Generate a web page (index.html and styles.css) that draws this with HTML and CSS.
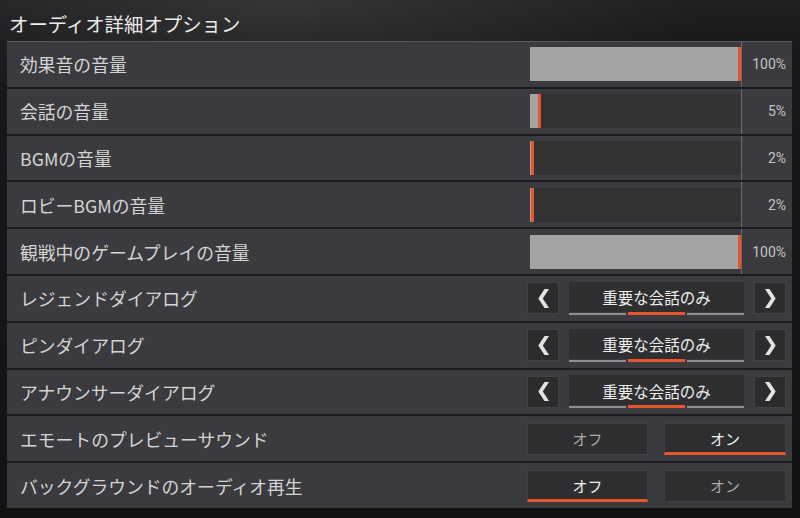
FILE: index.html
```html
<!DOCTYPE html>
<html lang="ja">
<head>
<meta charset="utf-8">
<link rel="stylesheet" href="styles.css">
</head>
<body>
<div class="page">
  <h1 class="title">オーディオ詳細オプション</h1>
  <div class="list">
    <div class="row">
      <div class="label">効果音の音量</div>
      <div class="slider">
        <div class="track"><div class="fill" style="width:100%"></div></div>
        <div class="pct">100%</div>
      </div>
    </div>
    <div class="row">
      <div class="label">会話の音量</div>
      <div class="slider">
        <div class="track"><div class="fill" style="width:5%"></div></div>
        <div class="pct">5%</div>
      </div>
    </div>
    <div class="row">
      <div class="label">BGMの音量</div>
      <div class="slider">
        <div class="track"><div class="fill" style="width:2%"></div></div>
        <div class="pct">2%</div>
      </div>
    </div>
    <div class="row">
      <div class="label">ロビーBGMの音量</div>
      <div class="slider">
        <div class="track"><div class="fill" style="width:2%"></div></div>
        <div class="pct">2%</div>
      </div>
    </div>
    <div class="row">
      <div class="label">観戦中のゲームプレイの音量</div>
      <div class="slider">
        <div class="track"><div class="fill" style="width:100%"></div></div>
        <div class="pct">100%</div>
      </div>
    </div>
    <div class="row">
      <div class="label">レジェンドダイアログ</div>
      <div class="selector">
        <div class="arrow"><svg width="11" height="19" viewBox="0 0 11 19"><polygon points="6.5,0 11,0 4.8,9.5 11,19 6.5,19 0.3,9.5" fill="#e2e2e2"/></svg></div>
        <div class="choice">
          <span class="choice-text">重要な会話のみ</span>
          <div class="segs"><span class="seg"></span><span class="seg on"></span><span class="seg"></span></div>
        </div>
        <div class="arrow"><svg width="11" height="19" viewBox="0 0 11 19"><polygon points="4.5,0 0,0 6.2,9.5 0,19 4.5,19 10.7,9.5" fill="#e2e2e2"/></svg></div>
      </div>
    </div>
    <div class="row">
      <div class="label">ピンダイアログ</div>
      <div class="selector">
        <div class="arrow"><svg width="11" height="19" viewBox="0 0 11 19"><polygon points="6.5,0 11,0 4.8,9.5 11,19 6.5,19 0.3,9.5" fill="#e2e2e2"/></svg></div>
        <div class="choice">
          <span class="choice-text">重要な会話のみ</span>
          <div class="segs"><span class="seg"></span><span class="seg on"></span><span class="seg"></span></div>
        </div>
        <div class="arrow"><svg width="11" height="19" viewBox="0 0 11 19"><polygon points="4.5,0 0,0 6.2,9.5 0,19 4.5,19 10.7,9.5" fill="#e2e2e2"/></svg></div>
      </div>
    </div>
    <div class="row">
      <div class="label">アナウンサーダイアログ</div>
      <div class="selector">
        <div class="arrow"><svg width="11" height="19" viewBox="0 0 11 19"><polygon points="6.5,0 11,0 4.8,9.5 11,19 6.5,19 0.3,9.5" fill="#e2e2e2"/></svg></div>
        <div class="choice">
          <span class="choice-text">重要な会話のみ</span>
          <div class="segs"><span class="seg"></span><span class="seg on"></span><span class="seg"></span></div>
        </div>
        <div class="arrow"><svg width="11" height="19" viewBox="0 0 11 19"><polygon points="4.5,0 0,0 6.2,9.5 0,19 4.5,19 10.7,9.5" fill="#e2e2e2"/></svg></div>
      </div>
    </div>
    <div class="row">
      <div class="label">エモートのプレビューサウンド</div>
      <div class="toggle">
        <div class="opt">オフ</div>
        <div class="opt active">オン</div>
      </div>
    </div>
    <div class="row">
      <div class="label">バックグラウンドのオーディオ再生</div>
      <div class="toggle">
        <div class="opt active">オフ</div>
        <div class="opt">オン</div>
      </div>
    </div>
  </div>
</div>
</body>
</html>
```
FILE: styles.css
```css
* { box-sizing: border-box; }
html, body {
  margin: 0;
  padding: 0;
  width: 800px;
  height: 518px;
  overflow: hidden;
}
body {
  background:
    radial-gradient(ellipse 420px 120px at 280px 0px, rgba(70,70,72,0.55), rgba(0,0,0,0) 100%),
    linear-gradient(180deg, #202022 0%, #18181a 10%, #121213 100%);
  font-family: "Noto Sans CJK JP", "Noto Sans", sans-serif;
  color: #d2d2d2;
}
.page {
  padding: 0 8px 0 7px;
}
.title {
  margin: 0;
  height: 41px;
  padding: 11px 0 0 2px;
  font-size: 19.4px;
  line-height: 26px;
  font-weight: 400;
  color: #ececec;
}
.list {
  display: flex;
  flex-direction: column;
  gap: 2px;
  background: #1c1c1e;
  border-top: 1px solid #58585b;
}
.row {
  height: 44.8px;
  background: #3b3b3f;
  display: flex;
  align-items: center;
  padding-left: 13px;
}
.label {
  flex: 1;
  font-size: 17.8px;
  line-height: 24px;
  color: #d4d4d4;
  white-space: nowrap;
}

/* slider */
.slider {
  display: flex;
  align-items: center;
  align-self: stretch;
}
.track {
  width: 211px;
  height: 34px;
  background: #323235;
}
.fill {
  height: 100%;
  background: #a4a4a4;
  border-right: 3px solid #e5562c;
  min-width: 3px;
}
.pct {
  align-self: stretch;
  width: 51px;
  border-left: 1px solid #6c6c6e;
  display: flex;
  align-items: center;
  justify-content: flex-end;
  padding-right: 6px;
  font-family: "Roboto", "DejaVu Sans", sans-serif;
  font-size: 14px;
  color: #c2c2c2;
}

/* selector */
.selector {
  display: flex;
  align-items: center;
  gap: 10px;
  padding-right: 6px;
}
.arrow {
  width: 32px;
  height: 32px;
  background: #2c2c2f;
  border: 1px solid #434346;
  display: flex;
  align-items: center;
  justify-content: center;
}
.choice {
  width: 175px;
  height: 33px;
  background: #2f2f32;
  display: flex;
  flex-direction: column;
}
.choice-text {
  flex: 1;
  display: flex;
  align-items: center;
  justify-content: center;
  font-size: 15.5px;
  color: #ededed;
  padding-top: 1px;
}
.segs {
  display: flex;
  gap: 2px;
  height: 3px;
  align-items: flex-end;
  background: #3b3b3f;
}
.seg {
  flex: 1;
  height: 2px;
  background: #8e8e90;
}
.seg.on {
  height: 3px;
  background: #e5562c;
}

/* toggle */
.toggle {
  display: flex;
  gap: 16px;
  padding-right: 6px;
}
.opt {
  width: 121px;
  height: 32px;
  background: #2e2e31;
  border: 1px solid #404043;
  display: flex;
  align-items: center;
  justify-content: center;
  font-size: 15px;
  color: #a9a9a9;
}
.opt + .opt { width: 122px; }
.opt.active {
  color: #f0f0f0;
  border-bottom: 3px solid #e5562c;
  padding-top: 2px;
}
```
